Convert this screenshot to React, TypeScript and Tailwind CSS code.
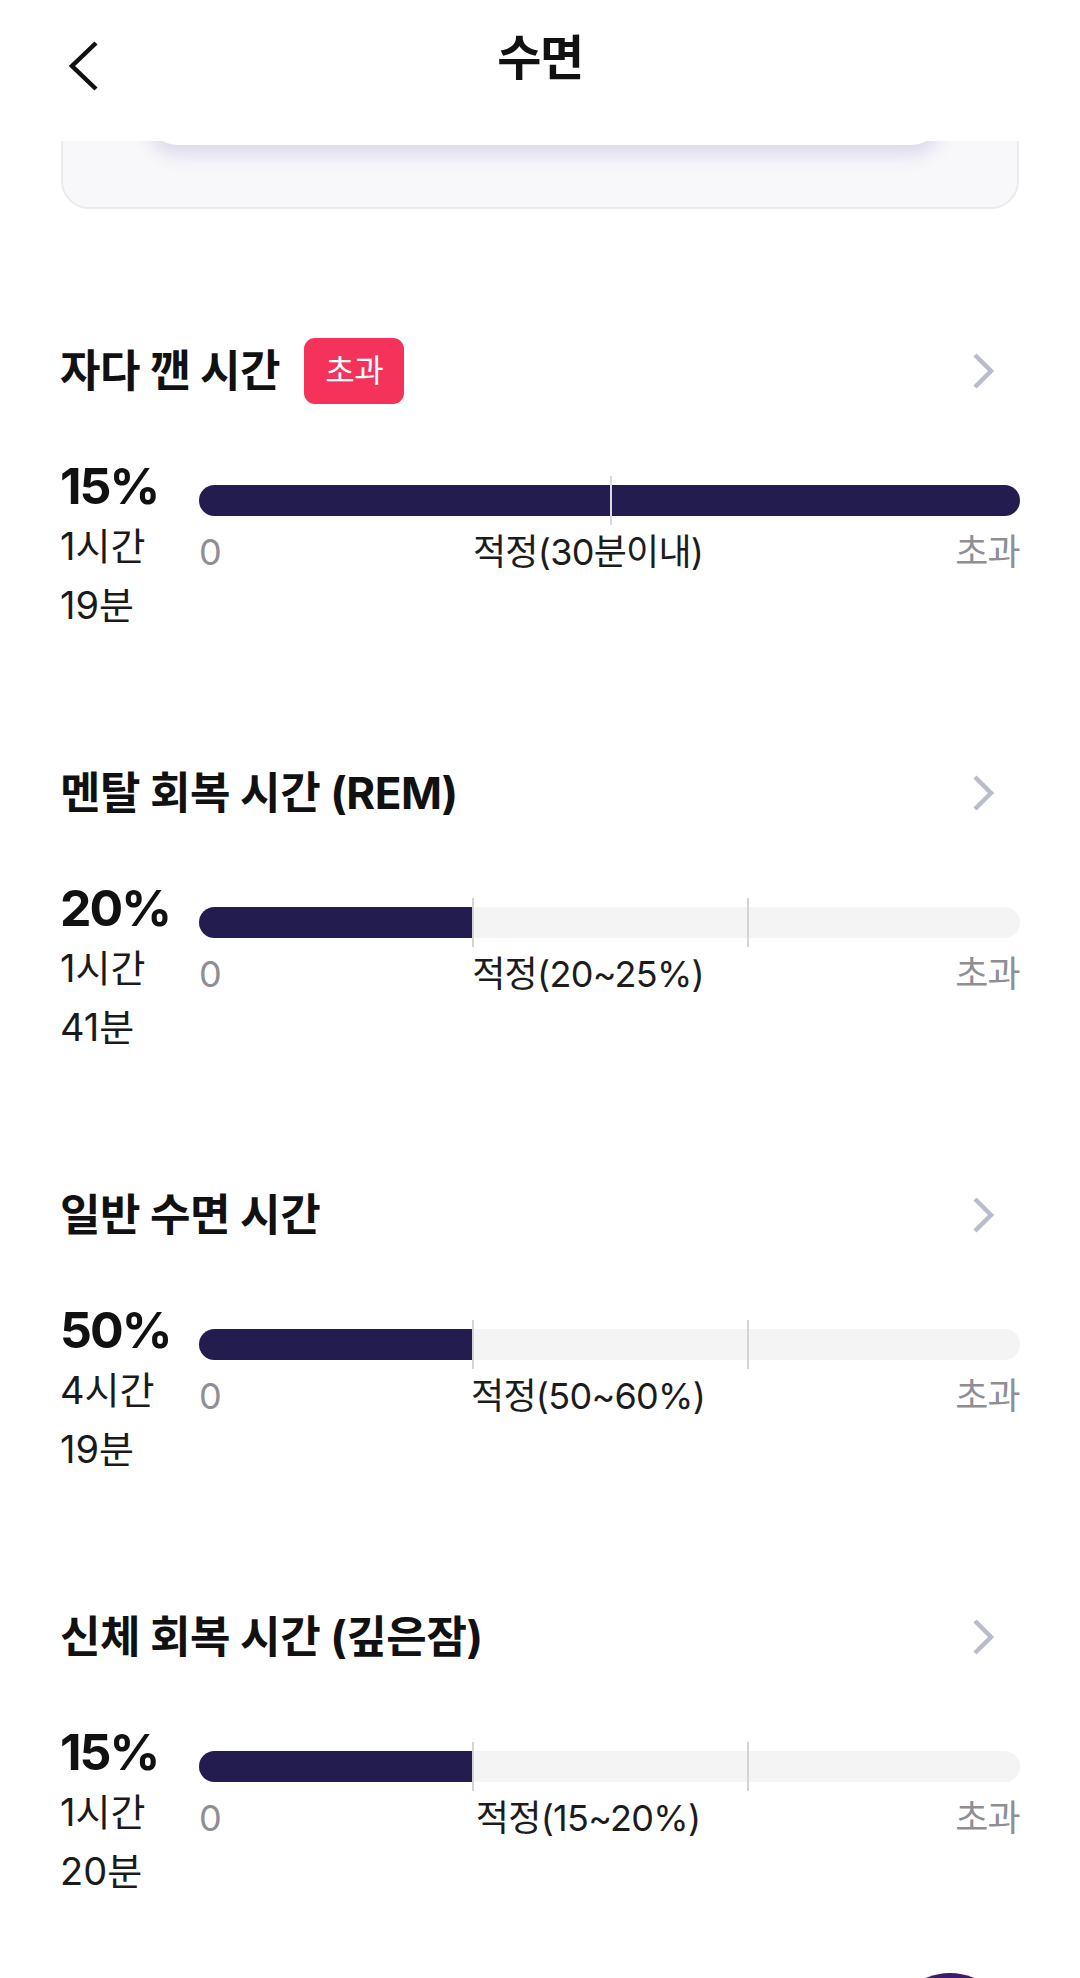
import React from 'react';

type Stage = {
  title: string;
  badge?: string;
  pct: string;
  hours: string;
  mins: string;
  fill: number;
  ticks: number[];
  range: string;
};

const stages: Stage[] = [
  { title: '자다 깬 시간', badge: '초과', pct: '15%', hours: '1시간', mins: '19분', fill: 100, ticks: [50], range: '적정(30분이내)' },
  { title: '멘탈 회복 시간 (REM)', pct: '20%', hours: '1시간', mins: '41분', fill: 33.3, ticks: [33.3, 66.7], range: '적정(20~25%)' },
  { title: '일반 수면 시간', pct: '50%', hours: '4시간', mins: '19분', fill: 33.3, ticks: [33.3, 66.7], range: '적정(50~60%)' },
  { title: '신체 회복 시간 (깊은잠)', pct: '15%', hours: '1시간', mins: '20분', fill: 33.3, ticks: [33.3, 66.7], range: '적정(15~20%)' },
];

function ChevronRight() {
  return (
    <svg width="24" height="40" viewBox="0 0 24 40" fill="none">
      <path d="M4 4 L20 20 L4 36" stroke="#b9bdcb" strokeWidth="4.5" strokeLinejoin="miter" />
    </svg>
  );
}

function StageRow({ s }: { s: Stage }) {
  const full = s.fill >= 100;
  return (
    <div className="flex flex-col">
      <div className="flex items-center h-[66px]">
        <h2 className="text-[44px] font-bold tracking-[-0.01em] text-[#111]">{s.title}</h2>
        {s.badge && (
          <span className="ml-[24px] h-[66px] w-[100px] rounded-[11px] bg-[#f5335a] text-white text-[32px] tracking-[-0.02em] flex items-center justify-center">
            {s.badge}
          </span>
        )}
        <div className="ml-auto mr-[25px] flex items-center">
          <ChevronRight />
        </div>
      </div>

      <div className="flex mt-[57px]">
        <div className="w-[139px] shrink-0 text-[#1a1a1a]">
          <div className="text-[50px] leading-[50px] font-bold tracking-[-0.04em] text-[#111]">{s.pct}</div>
          <div className="mt-[6px] text-[38px] leading-[59px]">{s.hours}</div>
          <div className="text-[38px] leading-[59px]">{s.mins}</div>
        </div>

        <div className="flex-1 pt-[24px]">
          <div className={`relative h-[31px] rounded-full ${full ? 'bg-[#231c4e]' : 'bg-[#f4f4f5]'}`}>
            {!full && (
              <div className="absolute left-0 top-0 h-full rounded-l-full rounded-r-[8px] bg-[#231c4e]" style={{ width: `${s.fill}%` }} />
            )}
            {s.ticks.map((t) => (
              <div
                key={t}
                className={`absolute top-[-9px] h-[49px] w-[2px] ${full ? 'bg-[#d9d8e4]' : 'bg-[#d4d4d8]'}`}
                style={{ left: `${t}%` }}
              />
            ))}
          </div>
          <div className="mt-[16px] flex justify-between text-[36px] leading-[40px] tracking-[-0.02em]">
            <span className="text-[#8e8e93]">0</span>
            <span className="text-[#1c1c1c]">{s.range}</span>
            <span className="text-[#8e8e93]">초과</span>
          </div>
        </div>
      </div>
    </div>
  );
}

export default function App() {
  return (
    <div className="relative w-[1080px] h-[1978px] overflow-hidden bg-white font-['Inter','Noto_Sans_CJK_KR',sans-serif]">
      {/* summary card scrolled under the header */}
      <div className="px-[61px]">
        <div className="mt-[-100px] h-[309px] rounded-[28px] border-2 border-[#ebebef] bg-[#f8f8fa] pl-[86px] pr-[77px] pb-[62px]">
          <div className="h-full rounded-[28px] bg-white shadow-[0_10px_18px_rgba(120,110,190,0.22)]" />
        </div>
      </div>

      <div className="px-[60px] mt-[129px] flex flex-col gap-[125px]">
        {stages.map((s) => (
          <StageRow key={s.title} s={s} />
        ))}
      </div>

      {/* header */}
      <div className="absolute top-0 inset-x-0 h-[141px] bg-white/95 backdrop-blur-md">
        <div className="relative h-[116px] flex items-center justify-center">
          <svg className="absolute left-[66px] top-[40px]" width="34" height="52" viewBox="0 0 34 52" fill="none">
            <path d="M30 3 L6 26 L30 49" stroke="#111" strokeWidth="4.5" />
          </svg>
          <h1 className="text-[48px] font-bold tracking-[-0.03em] text-[#111]">수면</h1>
        </div>
      </div>

      {/* floating button peeking at the bottom */}
      <div className="absolute left-[890px] top-[1973px] h-[120px] w-[120px] rounded-full bg-[#3d1a6e]" />
    </div>
  );
}
